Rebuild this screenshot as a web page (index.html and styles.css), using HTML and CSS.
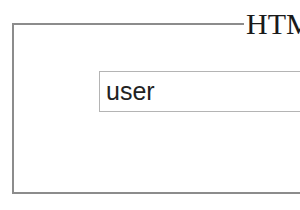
FILE: index.html
```html
<!DOCTYPE html>
<html>
<head>
<meta charset="utf-8">
<link rel="stylesheet" href="styles.css">
</head>
<body>
<form class="page">
  <fieldset class="group">
    <legend class="group-title">HTML Form</legend>
    <input class="field" type="text" value="user">
  </fieldset>
</form>
</body>
</html>
```
FILE: styles.css
```css
html, body {
  margin: 0;
  padding: 0;
  background: #ffffff;
  overflow: hidden;
}
.page {
  width: 300px;
  height: 210px;
  overflow: hidden;
  padding-top: 7px;
  box-sizing: border-box;
}
.group {
  margin: 0 0 0 12px;
  width: 420px;
  box-sizing: border-box;
  border: 2px solid #8c8c8c;
  padding: 30px 0 80px 85px;
  min-inline-size: 0;
}
.group-title {
  font-family: "Liberation Serif", "Times New Roman", serif;
  font-size: 30px;
  color: #1a1a1a;
  margin-left: 145px;
  padding: 0 2px;
  white-space: nowrap;
}
.field {
  display: block;
  margin: 0;
  width: 320px;
  height: 41px;
  box-sizing: border-box;
  border: 1px solid #b4b4b4;
  padding: 0 6px;
  font-family: "Liberation Sans", Arial, sans-serif;
  font-size: 25px;
  color: #222222;
  background: #ffffff;
  outline: none;
}
```
